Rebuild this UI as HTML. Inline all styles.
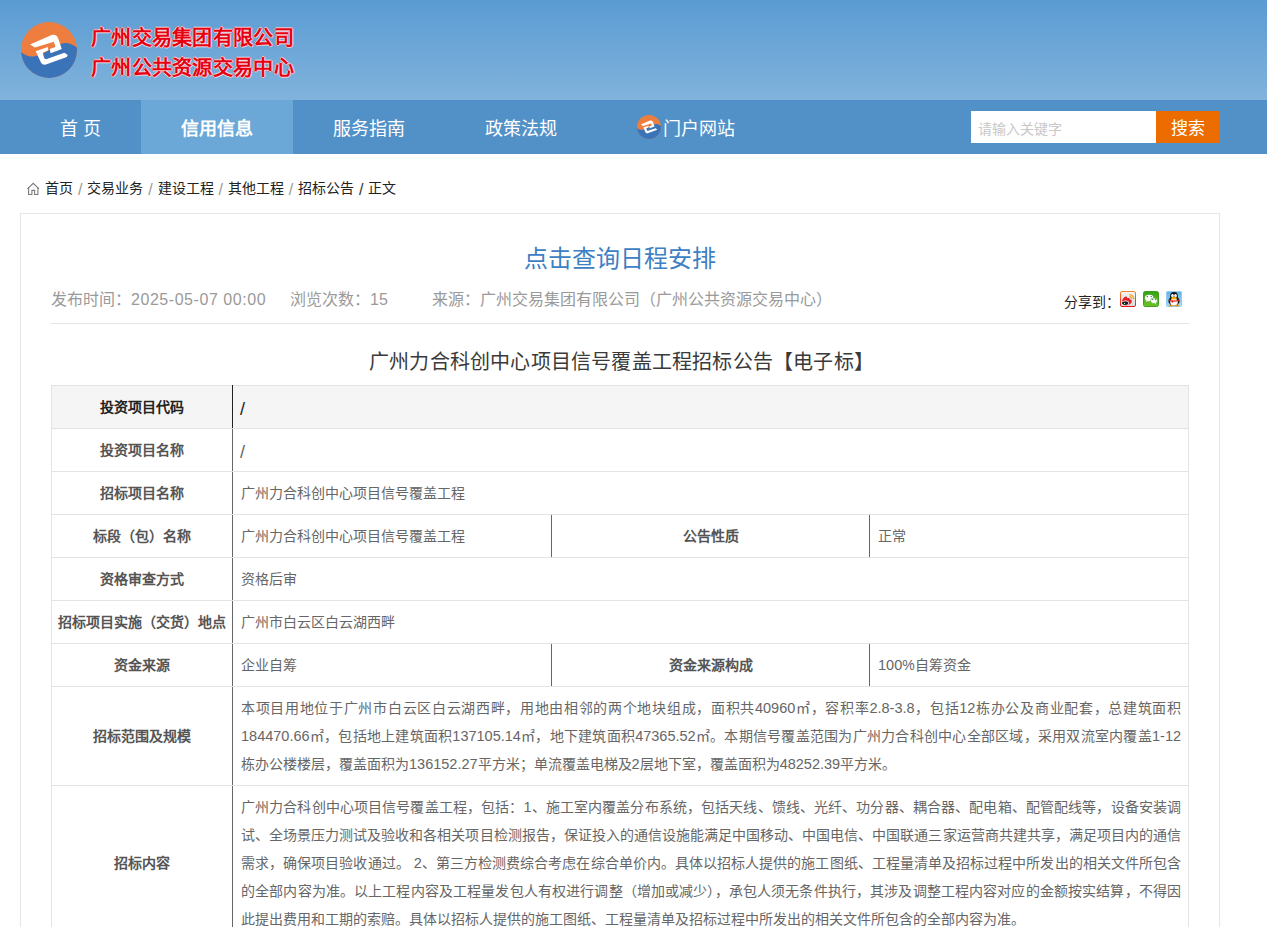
<!DOCTYPE html>
<html lang="zh-CN"><head><meta charset="utf-8">
<style>
*{margin:0;padding:0;box-sizing:border-box}
html,body{width:1267px;height:927px;overflow:hidden;background:#fff}
body{font-family:"Liberation Sans",sans-serif;position:relative;color:#333}
.abs{position:absolute;white-space:nowrap}
#hd{position:absolute;left:0;top:0;width:1267px;height:100px;background:linear-gradient(#5a9bd3,#81b3dc)}
#logo{position:absolute;left:21px;top:22px;width:56px;height:56px}
.ttl{position:absolute;left:91px;font-size:20px;line-height:20px;font-weight:bold;color:#e60012;letter-spacing:0.3px;-webkit-text-stroke:1.1px #e60012;paint-order:stroke fill;text-shadow:1px 0 0 rgba(255,255,255,.7),-1px 0 0 rgba(255,255,255,.7),0 1px 0 rgba(255,255,255,.7),0 -1px 0 rgba(255,255,255,.7)}
#nav{position:absolute;left:0;top:100px;width:1267px;height:54px;background:#5291c7}
#nav .it{position:absolute;top:0;height:54px;line-height:56px;padding-top:1px;font-size:18px;color:#fff;text-align:center}
#nav .on{background:#6ba7d7;font-weight:bold}
#sinput{position:absolute;left:971px;top:111px;width:185px;height:32px;background:#fff;color:#c8c8c8;font-size:14px;line-height:33px;padding-left:7px;padding-top:2px}
#sbtn{position:absolute;left:1156px;top:111px;width:64px;height:32px;background:#ec6c00;color:#fff;font-size:17px;line-height:35px;text-align:center}
#bc{position:absolute;left:45px;top:178px;font-size:14px;line-height:20px;color:#222}
#bc .s{color:#999;display:inline-block;width:14.3px;text-align:center;font-size:16px;line-height:20px;vertical-align:top;position:relative;top:1.5px}
#card{position:absolute;left:20px;top:213px;width:1200px;height:800px;border:1px solid #e6e6e6;border-bottom:none}
#title{position:absolute;left:20px;width:1200px;top:244px;text-align:center;font-size:24px;line-height:30px;color:#3d80c3}
.meta{position:absolute;top:289px;font-size:16px;line-height:22px;color:#9a9a9a;white-space:nowrap}
#share{position:absolute;left:1064px;top:292px;font-size:14px;line-height:20px;color:#222}
.ico{position:absolute;top:291px;width:16px;height:16px}
#hr{position:absolute;left:51px;top:323px;width:1138px;height:1px;background:#e6e6e6}
#atitle{position:absolute;left:0;width:1243px;top:349px;text-align:center;font-size:20px;line-height:26px;color:#3a3a3a;letter-spacing:0.2px}
table{position:absolute;left:51px;top:385px;width:1137px;border-collapse:collapse;table-layout:fixed;font-size:14px}
td{border:1px solid #e3e3e3;padding:0 7px 0 8px;line-height:28px;color:#666;vertical-align:middle}
td.l{text-align:center;font-weight:bold;color:#555;padding:0 6px;border-right:1px solid #666}
td.m{border-right:1px solid #666}
tr{height:43px}
tr.g td{background:#f5f5f5;color:#222}
.d{font-size:14.5px;line-height:20px}
.sl{font-size:18px;position:relative;top:2px;margin-left:-1px}
.jl{display:block;text-align:justify;text-align-last:justify;white-space:nowrap}
.ll{display:block;white-space:nowrap}
</style></head><body>
<div id="hd">
<svg id="logo" viewBox="21 22 56 56" width="56" height="56">
 <defs><clipPath id="cc"><circle cx="49" cy="50" r="28"/></clipPath></defs>
 <g clip-path="url(#cc)">
  <rect x="20" y="20" width="60" height="60" fill="#ee7e40"/>
  <path d="M19,50 C26,58 34,58 44,53 C54,48 60,42 67,43 C72,44 75,46 79,49 L79,80 L19,80 Z" fill="#3b73b9"/>
 </g>
 <path d="M30,44.4 L51.6,35.1 Q56.5,33.8 58.2,38.4 L61.8,48.9 L50.6,53.2 L49.7,48.9 L55.4,47 L54,41.8 L35,47.5 Z" fill="#fff"/>
 <path d="M35.7,51.3 L47.8,47 L48.3,50.3 L42.8,52.7 L44,57.4 Q44.8,59.6 46.8,58.9 L64.4,52.7 L67.7,55.1 L66.8,57 L45.9,64.6 Q42.5,65.2 41.1,62.7 Z" fill="#fff"/>
</svg>
<div class="ttl" style="top:28px">广州交易集团有限公司</div>
<div class="ttl" style="top:58px">广州公共资源交易中心</div>
</div>
<div id="nav">
 <div class="it" style="left:20px;width:121px">首<span style="display:inline-block;width:5px"></span>页</div>
 <div class="it on" style="left:141px;width:152px">信用信息</div>
 <div class="it" style="left:293px;width:152px">服务指南</div>
 <div class="it" style="left:445px;width:152px">政策法规</div>
 <div class="it" style="left:597px;width:176px;padding-left:40px;text-align:left">
  <svg style="position:absolute;left:40px;top:15px" width="24" height="24" viewBox="21 22 56 56">
   <defs><clipPath id="cc2"><circle cx="49" cy="50" r="28"/></clipPath></defs>
   <g clip-path="url(#cc2)">
    <rect x="20" y="20" width="60" height="60" fill="#ee7e40"/>
    <path d="M19,50 C26,58 34,58 44,53 C54,48 60,42 67,43 C72,44 75,46 79,49 L79,80 L19,80 Z" fill="#3b73b9"/>
   </g>
   <path d="M30,44.4 L51.6,35.1 Q56.5,33.8 58.2,38.4 L61.8,48.9 L50.6,53.2 L49.7,48.9 L55.4,47 L54,41.8 L35,47.5 Z" fill="#fff"/>
   <path d="M35.7,51.3 L47.8,47 L48.3,50.3 L42.8,52.7 L44,57.4 Q44.8,59.6 46.8,58.9 L64.4,52.7 L67.7,55.1 L66.8,57 L45.9,64.6 Q42.5,65.2 41.1,62.7 Z" fill="#fff"/>
  </svg>
  <span style="position:absolute;left:66px">门户网站</span>
 </div>
</div>
<div id="sinput">请输入关键字</div>
<div id="sbtn">搜索</div>

<svg class="abs" style="left:22px;top:178px" width="24" height="20" viewBox="0 0 24 20"><path d="M5.4,10.9 L11.2,5.3 L17,10.9" fill="none" stroke="#7a7a7a" stroke-width="1.1"/><path d="M6.6,9.6 V16.5 H9.9 V12.4 H12.6 V16.5 H15.9 V9.6" fill="none" stroke="#7a7a7a" stroke-width="1.1"/></svg>
<div id="bc">首页<span class="s">/</span>交易业务<span class="s">/</span>建设工程<span class="s">/</span>其他工程<span class="s">/</span>招标公告<span class="s" style="color:#333">/</span>正文</div>

<div id="card"></div>
<div id="title">点击查询日程安排</div>
<div class="meta" style="left:51px">发布时间：<span style="letter-spacing:0.55px">2025-05-07 00:00</span></div>
<div class="meta" style="left:290px">浏览次数：15</div>
<div class="meta" style="left:432px">来源：广州交易集团有限公司（广州公共资源交易中心）</div>
<div id="share">分享到：</div>
<svg class="ico" style="left:1120px" viewBox="0 0 16 16"><defs><linearGradient id="wbb" x1="0" y1="0" x2="0" y2="1"><stop offset="0" stop-color="#f6842a"/><stop offset="1" stop-color="#e3161e"/></linearGradient><linearGradient id="wbf" x1="0" y1="0" x2="0" y2="1"><stop offset="0" stop-color="#f3f3f3"/><stop offset="1" stop-color="#dadada"/></linearGradient></defs><rect x="0.5" y="0.5" width="15" height="15" rx="1.5" fill="url(#wbf)" stroke="url(#wbb)"/><path d="M2,11.2 C1.6,9 3.4,6.6 5.2,5.8 C6.8,5.1 7.6,6 7,7.2 C8.6,6.6 10,6.8 9.8,8.2 C11.6,8.6 12.2,9.8 11.6,11.2 C10.8,13.4 8,14.6 5.6,14.4 C3.6,14.3 2.2,13 2,11.2 Z" fill="#e6202a"/><ellipse cx="5.3" cy="12" rx="3.8" ry="2.5" fill="#fff"/><ellipse cx="5.2" cy="12.1" rx="3.2" ry="1.95" fill="#1a1a1a"/><circle cx="4.6" cy="12.3" r="0.6" fill="#fff"/><path d="M9.2,3.6 A4.6,4.6 0 0 1 13.8,8.4 M9.3,5.6 A2.6,2.6 0 0 1 11.9,8.3" stroke="#f5a21c" stroke-width="1.2" fill="none"/></svg>
<svg class="ico" style="left:1143px" viewBox="0 0 16 16"><defs><linearGradient id="wxg" x1="0" y1="0" x2="0" y2="1"><stop offset="0" stop-color="#33a319"/><stop offset="1" stop-color="#6ec125"/></linearGradient></defs><rect x="0.5" y="0.5" width="15" height="15" rx="1.8" fill="url(#wxg)" stroke="#3aa11c"/><ellipse cx="6.2" cy="7" rx="4.3" ry="3.3" fill="#fff"/><path d="M3.6,9.4 L3.2,11 L5.2,10" fill="#fff"/><ellipse cx="11" cy="9.8" rx="3.5" ry="2.9" fill="#fff" stroke="#47ae1f" stroke-width="0.7"/><path d="M12.6,12.2 L13.4,13.4 L11.6,12.6" fill="#fff"/><circle cx="4.4" cy="5.6" r="0.65" fill="#444"/><circle cx="8.2" cy="5.6" r="0.65" fill="#444"/><circle cx="9.7" cy="8.6" r="0.55" fill="#444"/><circle cx="12.4" cy="8.6" r="0.55" fill="#444"/></svg>
<svg class="ico" style="left:1166px" viewBox="0 0 16 16"><defs><linearGradient id="qqg" x1="0" y1="0" x2="0" y2="1"><stop offset="0" stop-color="#5eb1ea"/><stop offset="1" stop-color="#a9dcf8"/></linearGradient></defs><rect x="0.5" y="0.5" width="15" height="15" rx="1" fill="url(#qqg)" stroke="#8fcdf3"/><ellipse cx="8" cy="10" rx="5.6" ry="4.6" fill="#141414"/><ellipse cx="8" cy="5.4" rx="3.9" ry="4.3" fill="#141414"/><ellipse cx="8" cy="11" rx="3.8" ry="3.6" fill="#fff"/><ellipse cx="6.5" cy="4.8" rx="1.4" ry="1.7" fill="#fff"/><ellipse cx="9.5" cy="4.8" rx="1.4" ry="1.7" fill="#fff"/><circle cx="7" cy="5.1" r="0.45" fill="#111"/><circle cx="9" cy="5.1" r="0.45" fill="#111"/><ellipse cx="8" cy="7.2" rx="2.9" ry="1.2" fill="#f7b300"/><path d="M2.8,8.6 Q8,10.4 13.2,8.6 L13,9.9 Q8,11.4 3,9.9 Z" fill="#e42a22"/><rect x="5.6" y="9.6" width="1.4" height="2" fill="#e42a22"/><ellipse cx="5" cy="14.6" rx="2.3" ry="0.9" fill="#f39a00"/><ellipse cx="11" cy="14.6" rx="2.3" ry="0.9" fill="#f39a00"/></svg>
<div id="hr"></div>
<div id="atitle">广州力合科创中心项目信号覆盖工程招标公告【电子标】</div>

<table>
<colgroup><col style="width:181px"><col style="width:319px"><col style="width:318px"><col style="width:319px"></colgroup>
<tr class="g"><td class="l" style="color:#222;border-right-color:#222">投资项目代码</td><td colspan="3" style="color:#222"><span class="sl">/</span></td></tr>
<tr><td class="l">投资项目名称</td><td colspan="3"><span class="sl">/</span></td></tr>
<tr><td class="l">招标项目名称</td><td colspan="3">广州力合科创中心项目信号覆盖工程</td></tr>
<tr><td class="l">标段（包）名称</td><td class="m">广州力合科创中心项目信号覆盖工程</td><td class="l">公告性质</td><td>正常</td></tr>
<tr><td class="l">资格审查方式</td><td colspan="3">资格后审</td></tr>
<tr><td class="l">招标项目实施（交货）地点</td><td colspan="3">广州市白云区白云湖西畔</td></tr>
<tr><td class="l">资金来源</td><td class="m">企业自筹</td><td class="l">资金来源构成</td><td><span class="d">100</span>%自筹资金</td></tr>
<tr style="height:99px"><td class="l">招标范围及规模</td><td colspan="3"><span class="jl">本项目用地位于广州市白云区白云湖西畔，用地由相邻的两个地块组成，面积共<span class="d">40960</span>㎡，容积率<span class="d">2.8-3.8</span>，包括<span class="d">12</span>栋办公及商业配套，总建筑面积</span><span class="jl"><span class="d">184470.66</span>㎡，包括地上建筑面积<span class="d">137105.14</span>㎡，地下建筑面积<span class="d">47365.52</span>㎡。本期信号覆盖范围为广州力合科创中心全部区域，采用双流室内覆盖<span class="d">1-12</span></span><span class="ll">栋办公楼楼层，覆盖面积为<span class="d">136152.27</span>平方米；单流覆盖电梯及<span class="d">2</span>层地下室，覆盖面积为<span class="d">48252.39</span>平方米。</span></td></tr>
<tr style="height:155px"><td class="l">招标内容</td><td colspan="3"><span class="jl">广州力合科创中心项目信号覆盖工程，包括：<span class="d">1</span>、施工室内覆盖分布系统，包括天线、馈线、光纤、功分器、耦合器、配电箱、配管配线等，设备安装调</span><span class="jl">试、全场景压力测试及验收和各相关项目检测报告，保证投入的通信设施能满足中国移动、中国电信、中国联通三家运营商共建共享，满足项目内的通信</span><span class="jl">需求，确保项目验收通过。 <span class="d">2</span>、第三方检测费综合考虑在综合单价内。具体以招标人提供的施工图纸、工程量清单及招标过程中所发出的相关文件所包含</span><span class="jl">的全部内容为准。以上工程内容及工程量发包人有权进行调整（增加或减少），承包人须无条件执行，其涉及调整工程内容对应的金额按实结算，不得因</span><span class="ll">此提出费用和工期的索赔。具体以招标人提供的施工图纸、工程量清单及招标过程中所发出的相关文件所包含的全部内容为准。</span></td></tr>
</table>
</body></html>
